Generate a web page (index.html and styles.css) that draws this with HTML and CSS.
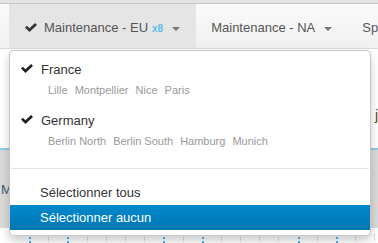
FILE: index.html
```
<!DOCTYPE html>
<html lang="fr">
<head>
    <meta charset="UTF-8">
    <meta name="viewport" content="width=device-width, initial-scale=1.0">
    <title>Maintenance</title>
    <link rel="stylesheet" href="styles.css">
</head>
<body>
    <div class="topbar"></div>

    <div class="navbar">
        <div class="tab active">
            <svg class="check" width="12" height="9" viewBox="0 0 12 9"><path d="M0 4.6 L1.9 2.7 L4.4 5.2 L10.1 0 L12 1.9 L4.4 9 Z" fill="#333"/></svg>
            <span>Maintenance - EU</span>
            <span class="count">x8</span>
            <span class="caret"></span>
        </div>
        <div class="tab">
            <span>Maintenance - NA</span>
            <span class="caret"></span>
        </div>
        <div class="tab">
            <span>Sp</span>
        </div>
    </div>

    <div class="page">
        <div class="panel">
            <span class="panel-glyph">j</span>
        </div>
        <div class="chart">
            <span class="chart-label">M</span>
        </div>
        <div class="grid">
            <span class="line blue"></span>
            <span class="line"></span>
            <span class="line blue"></span>
            <span class="line"></span>
            <span class="line"></span>
            <span class="line"></span>
            <span class="line"></span>
            <span class="line blue"></span>
            <span class="line"></span>
            <span class="line blue"></span>
            <span class="line"></span>
            <span class="line"></span>
            <span class="line"></span>
            <span class="line"></span>
            <span class="line blue"></span>
            <span class="line"></span>
            <span class="line blue"></span>
            <span class="line"></span>
            <span class="line"></span>
        </div>
    </div>

    <ul class="dropdown-menu">
        <li class="group">
            <div class="group-title">
                <svg class="check" width="12" height="9" viewBox="0 0 12 9"><path d="M0 4.6 L1.9 2.7 L4.4 5.2 L10.1 0 L12 1.9 L4.4 9 Z" fill="#222"/></svg>
                France
            </div>
            <div class="cities">
                <span>Lille</span>
                <span>Montpellier</span>
                <span>Nice</span>
                <span>Paris</span>
            </div>
        </li>
        <li class="group">
            <div class="group-title">
                <svg class="check" width="12" height="9" viewBox="0 0 12 9"><path d="M0 4.6 L1.9 2.7 L4.4 5.2 L10.1 0 L12 1.9 L4.4 9 Z" fill="#222"/></svg>
                Germany
            </div>
            <div class="cities">
                <span>Berlin North</span>
                <span>Berlin South</span>
                <span>Hamburg</span>
                <span>Munich</span>
            </div>
        </li>
        <li class="divider"></li>
        <li class="action">Sélectionner tous</li>
        <li class="action selected">Sélectionner aucun</li>
    </ul>
</body>
</html>
```

FILE: styles.css
```
body {
    font-family: "Liberation Sans", Arial, sans-serif;
    font-size: 13px;
    margin: 0;
    background-color: #ffffff;
    color: #333;
    overflow: hidden;
}
.topbar {
    height: 3px;
    background-color: #e4e4e4;
    border-bottom: 1px solid #c4c4c4;
}
.navbar {
    display: flex;
    height: 44px;
    padding-left: 9px;
    background: linear-gradient(#fbfbfb, #f0f0f0);
    border-bottom: 1px solid #dadada;
}
.tab {
    display: flex;
    align-items: center;
    padding: 3px 15px 0 15px;
    color: #555;
    white-space: nowrap;
}
.tab.active {
    background-color: #e5e5e5;
    padding-left: 16px;
    padding-right: 16px;
}
.tab .check {
    margin-right: 7px;
    margin-top: -1px;
}
.count {
    color: #62bbe9;
    font-size: 10px;
    font-weight: bold;
    margin-left: 4px;
    margin-top: 2px;
}
.caret {
    width: 0;
    height: 0;
    margin-left: 9px;
    margin-top: 2px;
    border-top: 4px solid #777;
    border-left: 4px solid transparent;
    border-right: 4px solid transparent;
}
.page {
    position: relative;
}
.panel {
    height: 99px;
    position: relative;
}
.panel-glyph {
    position: absolute;
    right: 0;
    top: 58px;
    color: #5a4010;
    font-size: 14px;
}
.chart {
    height: 78px;
    border-top: 2px solid #8dcaee;
    background-color: #dcdad8;
    position: relative;
}
.chart-label {
    position: absolute;
    left: 1px;
    top: 32px;
    color: #3d5a78;
}
.grid {
    display: flex;
    height: 20px;
    padding-left: 29px;
    padding-top: 6px;
}
.line {
    width: 19.2px;
    flex: none;
    border-left: 1px dotted #c8c8c8;
    box-sizing: border-box;
}
.line.blue {
    border-left: 2px dotted #5aaee0;
}
.dropdown-menu {
    position: absolute;
    top: 50px;
    left: 9px;
    width: 360px;
    margin: 0;
    padding: 6px 0 5px 0;
    list-style: none;
    background-color: #ffffff;
    border: 1px solid rgba(0, 0, 0, 0.22);
    border-radius: 5px;
    box-shadow: 0 5px 10px rgba(0, 0, 0, 0.2);
}
.group {
    padding-bottom: 10px;
}
.group-title {
    display: flex;
    align-items: center;
    height: 25px;
    padding-left: 11px;
    color: #333;
}
.group-title .check {
    margin-right: 8px;
    margin-top: -2px;
}
.cities {
    padding-left: 38px;
    font-size: 11px;
    line-height: 16px;
    color: #999;
}
.cities span {
    margin-right: 4px;
}
.divider {
    height: 1px;
    margin: 9px 1px 11px 1px;
    background-color: #e5e5e5;
}
.action {
    height: 25px;
    line-height: 25px;
    padding-left: 30px;
    color: #333;
}
.action.selected {
    color: #ffffff;
    background: linear-gradient(#0088cc, #0077b3);
}
```
